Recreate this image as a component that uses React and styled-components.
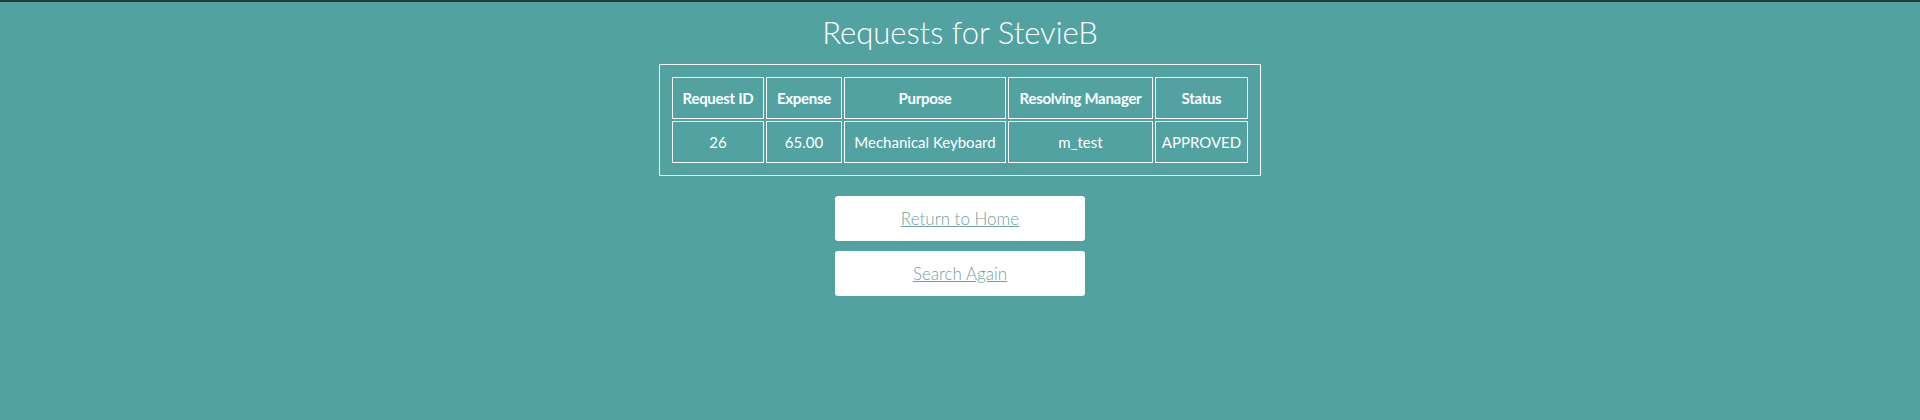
import React from 'react';
import styled, { createGlobalStyle } from 'styled-components';

const requests = [
	{ id: 26, expense: '65.00', purpose: 'Mechanical Keyboard', manager: 'm_test', status: 'APPROVED' },
];

const columns = [
	{ label: 'Request ID', width: 92 },
	{ label: 'Expense', width: 76 },
	{ label: 'Purpose', width: 162 },
	{ label: 'Resolving Manager', width: 145 },
	{ label: 'Status', width: 93 },
];

export default function App() {
	return (
		<React.Fragment>
			<GlobalStyle />
			<Page>
				<Title>Requests for StevieB</Title>
				<Table>
					<thead>
						<tr>
							{columns.map((c) => (
								<Th key={c.label} $w={c.width}>{c.label}</Th>
							))}
						</tr>
					</thead>
					<tbody>
						{requests.map((r) => (
							<tr key={r.id}>
								<Td>{r.id}</Td>
								<Td>{r.expense}</Td>
								<Td>{r.purpose}</Td>
								<Td>{r.manager}</Td>
								<Td>{r.status}</Td>
							</tr>
						))}
					</tbody>
				</Table>
				<Buttons>
					<Button><a href="#home">Return to Home</a></Button>
					<Button><a href="#search">Search Again</a></Button>
				</Buttons>
			</Page>
		</React.Fragment>
	);
}

const GlobalStyle = createGlobalStyle`
	html, body {
		margin: 0;
		padding: 0;
		background: #52a2a2;
	}
	body {
		border-top: 2px solid #263a3e;
		font-family: Lato, "Open Sans", sans-serif;
		color: #ffffff;
	}
`;

const Page = styled.div`
	display: flex;
	flex-direction: column;
	align-items: center;
	min-height: 418px;
`;

const Title = styled.h1`
	font-family: Lato, sans-serif;
	font-weight: 300;
	font-size: 31px;
	line-height: 36px;
	margin: 12px 0 14px 0;
	color: #ffffff;
`;

const Table = styled.table`
	border: 1px solid #ffffff;
	border-spacing: 2px;
	padding: 10px;
	table-layout: fixed;
	font-family: Lato, sans-serif;
	font-size: 15px;
	color: #ffffff;
`;

const Th = styled.th`
	box-sizing: border-box;
	width: ${(p) => p.$w}px;
	height: 42px;
	padding: 0 2px;
	border: 1px solid #ffffff;
	font-weight: 700;
	letter-spacing: -0.3px;
	white-space: nowrap;
	text-align: center;
`;

const Td = styled.td`
	box-sizing: border-box;
	height: 42px;
	padding: 0 2px;
	border: 1px solid #ffffff;
	font-weight: 400;
	white-space: nowrap;
	text-align: center;
`;

const Buttons = styled.div`
	display: flex;
	flex-direction: column;
	gap: 10px;
	margin-top: 20px;
`;

const Button = styled.div`
	display: flex;
	align-items: center;
	justify-content: center;
	width: 250px;
	height: 45px;
	background: #ffffff;
	border-radius: 3px;

	a {
		font-family: Lato, sans-serif;
		font-weight: 300;
		font-size: 17px;
		color: #6f9fa1;
		text-decoration: underline;
	}
`;
